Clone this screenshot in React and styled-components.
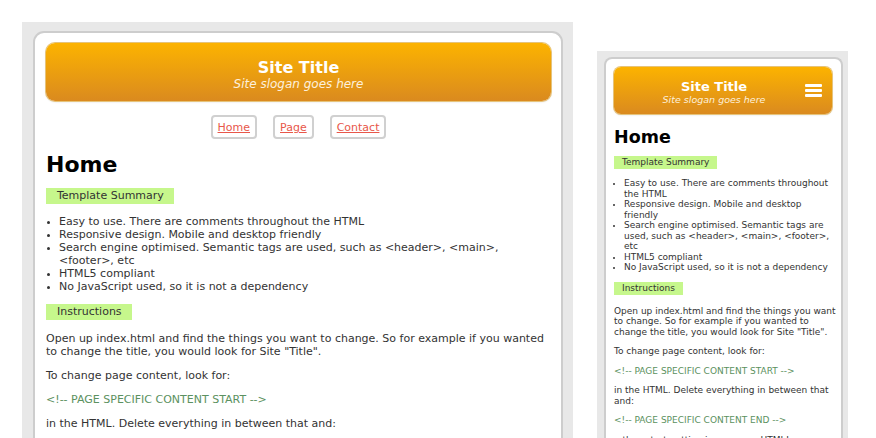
import React from "react";
import styled, { createGlobalStyle, css } from "styled-components";

const Global = createGlobalStyle`
  html, body { margin: 0; padding: 0; background: #fff; height: 438px; overflow: hidden; }
  body { font-family: "DejaVu Sans", Verdana, sans-serif; }
`;

const Stage = styled.div`
  display: flex;
  align-items: flex-start;
  gap: 24px;
  padding: 22px 0 0 22px;
  height: 438px;
  box-sizing: border-box;
  overflow: hidden;
`;

const Frame = styled.div`
  background: #e8e8e8;
  box-sizing: border-box;
  height: 600px;
  flex-shrink: 0;
  ${(p) =>
    p.$mobile
      ? css`
          width: 251px;
          margin-top: 29px;
          padding: 6px 5px 0 7px;
        `
      : css`
          width: 551px;
          padding: 9px 10px 0 11px;
        `}
`;

const Card = styled.div`
  background: #fff;
  border: 2px solid #cdcdcd;
  border-bottom: none;
  border-radius: ${(p) => (p.$mobile ? "8px 8px 0 0" : "11px 11px 0 0")};
  height: 100%;
  box-sizing: border-box;
  padding: ${(p) => (p.$mobile ? "8px 5px 0 8px" : "10px 10px 0 11px")};
  color: #333;
  font-size: ${(p) => (p.$mobile ? "9px" : "11px")};
  line-height: ${(p) => (p.$mobile ? "10.5px" : "13px")};
`;

const Header = styled.header`
  position: relative;
  box-sizing: border-box;
  height: ${(p) => (p.$mobile ? "47px" : "58px")};
  width: ${(p) => (p.$mobile ? "218px" : "auto")};
  border-radius: ${(p) => (p.$mobile ? "7px" : "9px")};
  background: linear-gradient(#fcb300, #da8a1f);
  box-shadow: 0 0 0 1px #e6c37a, 0 1px 2px rgba(0, 0, 0, 0.15);
  color: #fff;
  display: flex;
  flex-direction: column;
  align-items: center;
  text-align: center;
  padding-top: ${(p) => (p.$mobile ? "12px" : "16px")};
  ${(p) => p.$mobile && css`padding-right: 18px;`}
`;

const Title = styled.div`
  font-weight: bold;
  font-size: ${(p) => (p.$mobile ? "13px" : "16px")};
  line-height: ${(p) => (p.$mobile ? "15px" : "18px")};
`;

const Slogan = styled.div`
  font-style: italic;
  color: #fdf0dc;
  font-size: ${(p) => (p.$mobile ? "9.5px" : "12px")};
  line-height: ${(p) => (p.$mobile ? "12px" : "14px")};
`;

const Burger = styled.div`
  position: absolute;
  right: 10px;
  top: 17px;
  width: 17px;
  display: flex;
  flex-direction: column;
  gap: 2.5px;
  span {
    display: block;
    height: 2.5px;
    background: #fff;
    border-radius: 1px;
  }
`;

const Nav = styled.nav`
  display: flex;
  justify-content: center;
  gap: 16px;
  margin: 14px 0 0;
`;

const NavLink = styled.a`
  display: inline-block;
  border: 2px solid #d0d0d0;
  border-radius: 4px;
  padding: 4px 5px 3px;
  color: #e8574a;
  text-decoration: underline;
  font-size: 11px;
  line-height: 13px;
`;

const H1 = styled.h1`
  margin: ${(p) => (p.$mobile ? "13px 0 9px" : "13px 0 10px")};
  font-size: ${(p) => (p.$mobile ? "17.5px" : "22px")};
  line-height: ${(p) => (p.$mobile ? "20px" : "26px")};
  color: #000;
`;

const Label = styled.h2`
  display: inline-block;
  margin: 0;
  background: #c6f78c;
  font-weight: normal;
  color: #333;
  font-size: inherit;
  ${(p) =>
    p.$mobile
      ? css`
          padding: 1px 8px 1px 8px;
          line-height: 11px;
        `
      : css`
          padding: 1px 10px 2px 11px;
          line-height: 13px;
        `}
`;

const List = styled.ul`
  margin: ${(p) => (p.$mobile ? "9px 0 9px" : "11px 0 11px")};
  padding-left: ${(p) => (p.$mobile ? "10px" : "13px")};
  li { margin: 0; }
  li::marker { font-size: 0.8em; }
`;

const P = styled.p`
  margin: ${(p) => (p.$mobile ? "9px 0" : "11px 0")};
  ${(p) => p.$lead && css`margin-top: ${p.$mobile ? "11px" : "12px"};`}
  ${(p) => p.$code && css`color: #5b9160;`}
`;

function Content({ mobile }) {
  return (
    <>
      <H1 $mobile={mobile}>Home</H1>
      <Label $mobile={mobile}>Template Summary</Label>
      <List $mobile={mobile}>
        <li>Easy to use. There are comments throughout the HTML</li>
        <li>Responsive design. Mobile and desktop friendly</li>
        <li>
          Search engine optimised. Semantic tags are used, such as &lt;header&gt;, &lt;main&gt;,
          &lt;footer&gt;, etc
        </li>
        <li>HTML5 compliant</li>
        <li>No JavaScript used, so it is not a dependency</li>
      </List>
      <Label $mobile={mobile}>Instructions</Label>
      <P $mobile={mobile} $lead>
        Open up index.html and find the things you want to change. So for example if you wanted to
        change the title, you would look for Site "Title".
      </P>
      <P $mobile={mobile}>To change page content, look for:</P>
      <P $mobile={mobile} $code>&lt;!-- PAGE SPECIFIC CONTENT START --&gt;</P>
      <P $mobile={mobile}>in the HTML. Delete everything in between that and:</P>
      <P $mobile={mobile} $code>&lt;!-- PAGE SPECIFIC CONTENT END --&gt;</P>
      <P $mobile={mobile}>...then start putting in your own HTML!</P>
    </>
  );
}

export default function App() {
  return (
    <>
      <Global />
      <Stage>
        <Frame>
          <Card>
            <Header>
              <Title>Site Title</Title>
              <Slogan>Site slogan goes here</Slogan>
            </Header>
            <Nav>
              <NavLink href="#">Home</NavLink>
              <NavLink href="#">Page</NavLink>
              <NavLink href="#">Contact</NavLink>
            </Nav>
            <Content />
          </Card>
        </Frame>
        <Frame $mobile>
          <Card $mobile>
            <Header $mobile>
              <Title $mobile>Site Title</Title>
              <Slogan $mobile>Site slogan goes here</Slogan>
              <Burger>
                <span />
                <span />
                <span />
              </Burger>
            </Header>
            <Content mobile />
          </Card>
        </Frame>
      </Stage>
    </>
  );
}
